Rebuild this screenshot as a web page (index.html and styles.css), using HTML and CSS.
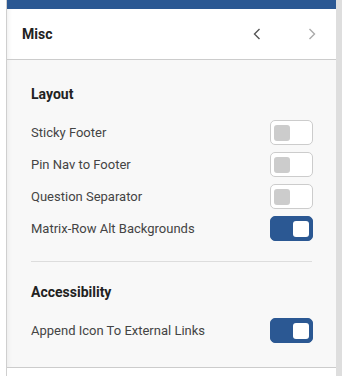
FILE: index.html
```html
<!DOCTYPE html>
<html>
<head>
<meta charset="utf-8">
<link rel="stylesheet" href="styles.css">
</head>
<body>
<div class="frame">
  <div class="panel">
    <div class="topbar"></div>
    <div class="header">
      <span class="title">Misc</span>
      <div class="nav">
        <svg class="chev prev" width="8" height="12" viewBox="0 0 8 12"><path d="M6.5 1 L1.5 6 L6.5 11" fill="none" stroke="currentColor" stroke-width="1.4"/></svg>
        <svg class="chev next" width="8" height="12" viewBox="0 0 8 12"><path d="M1.5 1 L6.5 6 L1.5 11" fill="none" stroke="currentColor" stroke-width="1.4"/></svg>
      </div>
    </div>
    <div class="content">
      <div class="section">
        <div class="heading">Layout</div>
        <div class="rows">
          <div class="row"><span>Sticky Footer</span><span class="toggle"><span class="knob"></span></span></div>
          <div class="row"><span>Pin Nav to Footer</span><span class="toggle"><span class="knob"></span></span></div>
          <div class="row"><span>Question Separator</span><span class="toggle"><span class="knob"></span></span></div>
          <div class="row"><span>Matrix-Row Alt Backgrounds</span><span class="toggle on"><span class="knob"></span></span></div>
        </div>
      </div>
      <div class="divider"></div>
      <div class="section">
        <div class="heading">Accessibility</div>
        <div class="rows">
          <div class="row"><span>Append Icon To External Links</span><span class="toggle on"><span class="knob"></span></span></div>
        </div>
      </div>
    </div>
  </div>
  <div class="track"></div>
</div>
</body>
</html>
```
FILE: styles.css
```css
html, body {
  margin: 0;
  padding: 0;
  background: #ffffff;
  font-family: Roboto, "Liberation Sans", sans-serif;
}
.frame {
  display: flex;
  height: 376px;
  padding-left: 6px;
}
.panel {
  width: 329px;
  border-left: 1px solid #cfcfcf;
  display: flex;
  flex-direction: column;
}
.track {
  width: 6px;
  background: #dedede;
}
.topbar {
  height: 9px;
  background: #2b5893;
}
.header {
  height: 50px;
  background: #ffffff;
  border-bottom: 1px solid #cccccc;
  display: flex;
  align-items: center;
  justify-content: space-between;
  padding: 0 20px 0 15px;
  box-shadow: inset 5px 0 5px -4px rgba(0,0,0,0.08);
}
.title {
  font-size: 14px;
  font-weight: 700;
  color: #222222;
  margin-top: -1px;
}
.nav {
  display: flex;
  gap: 47px;
  align-items: center;
}
.chev { display: block; }
.prev { color: #555555; }
.next { color: #aaaaaa; }
.content {
  background: #f8f8f8;
  border-bottom: 1px solid #cccccc;
  padding: 24px 23px 24px 24px;
  box-shadow: inset 5px 0 5px -4px rgba(0,0,0,0.06);
}
.heading {
  font-size: 14px;
  font-weight: 700;
  color: #222222;
  line-height: 20px;
  margin-bottom: 16px;
}
.rows {
  display: flex;
  flex-direction: column;
  gap: 7px;
}
.row {
  display: flex;
  align-items: center;
  justify-content: space-between;
  height: 25px;
  font-size: 13px;
  color: #444444;
}
.toggle {
  box-sizing: border-box;
  width: 43px;
  height: 25px;
  border: 1px solid #cccccc;
  border-radius: 5px;
  background: #ffffff;
  padding: 3px;
  display: flex;
  align-items: center;
}
.knob {
  width: 16px;
  height: 16px;
  border-radius: 3px;
  background: #cccccc;
}
.toggle.on {
  background: #2b5893;
  border-color: #2b5893;
  justify-content: flex-end;
}
.toggle.on .knob {
  background: #ffffff;
}
.divider {
  height: 1px;
  background: #dddddd;
  margin: 20px 1px 20px 0;
}
```
